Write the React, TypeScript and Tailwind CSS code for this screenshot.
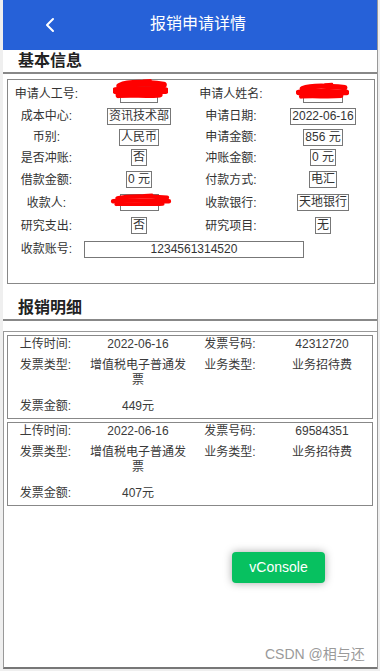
import React from "react";

const FONT = { fontFamily: '"Liberation Sans", "Noto Sans CJK SC", sans-serif' };

function Scribble({ w, h, className }: { w: number; h: number; className: string }) {
  return (
    <svg
      width={w}
      height={h}
      viewBox={`0 0 ${w} ${h}`}
      className={className}
      fill="none"
      stroke="#ff0000"
      strokeLinecap="round"
      strokeLinejoin="round"
    >
      <path d={`M${w * 0.12} ${h * 0.35} C ${w * 0.3} ${h * 0.15}, ${w * 0.6} ${h * 0.2}, ${w * 0.92} ${h * 0.3}`} strokeWidth={h * 0.28} />
      <path d={`M${w * 0.05} ${h * 0.55} C ${w * 0.3} ${h * 0.45}, ${w * 0.6} ${h * 0.5}, ${w * 0.95} ${h * 0.55}`} strokeWidth={h * 0.3} />
      <path d={`M${w * 0.1} ${h * 0.75} C ${w * 0.35} ${h * 0.7}, ${w * 0.6} ${h * 0.78}, ${w * 0.85} ${h * 0.72}`} strokeWidth={h * 0.25} />
      <path d={`M${w * 0.55} ${h * 0.12} L ${w * 0.68} ${h * 0.1}`} strokeWidth={h * 0.12} />
    </svg>
  );
}

function ValBox({ children }: { children: React.ReactNode }) {
  return (
    <span className="inline-block border border-[#777] leading-[15px] px-[1px] text-[12px] text-[#333] whitespace-nowrap">
      {children}
    </span>
  );
}

function Redacted({ w, sw, sh, sl, st }: { w: number; sw: number; sh: number; sl: number; st: number }) {
  return (
    <span className="relative inline-block h-[17px] border border-[#777]" style={{ width: w }}>
      <span className="absolute" style={{ left: sl, top: st }}>
        <Scribble w={sw} h={sh} className="block" />
      </span>
    </span>
  );
}

const COLS = "grid grid-cols-[75px_110px_74px_110px]";

function BasicRow({ h, cells }: { h: number; cells: React.ReactNode[] }) {
  return (
    <div className={`${COLS} items-center`} style={{ height: h }}>
      {cells.map((c, i) => (
        <div key={i} className={`flex justify-center text-[12px] text-[#333] whitespace-nowrap ${i % 2 === 1 ? "" : ""}`}>
          {c}
        </div>
      ))}
    </div>
  );
}

function SectionTitle({ text }: { text: string }) {
  return (
    <div>
      <div className="h-[22px] leading-[22px] pl-[15px] text-[16px] font-bold text-[#222]">{text}</div>
      <div className="h-[2px] bg-[#888]" />
    </div>
  );
}

function InvoiceCard({ time, no, amount }: { time: string; no: string; amount: string }) {
  return (
    <div className="border border-[#888] ml-[3px] mr-[4px] pt-[1px] pb-[4px] text-[12px] leading-[15px] text-[#3a3a3a]">
      <div className={`${COLS} items-start`}>
        <div className="text-center">上传时间:</div>
        <div className="text-center px-[5px]">{time}</div>
        <div className="text-center">发票号码:</div>
        <div className="text-center">{no}</div>
      </div>
      <div className={`${COLS} items-start mt-[6px]`}>
        <div className="text-center">发票类型:</div>
        <div className="text-center px-[5px]">增值税电子普通发票</div>
        <div className="text-center">业务类型:</div>
        <div className="text-center">业务招待费</div>
      </div>
      <div className={`${COLS} items-start mt-[11px]`}>
        <div className="text-center">发票金额:</div>
        <div className="text-center px-[5px]">{amount}</div>
        <div />
        <div />
      </div>
    </div>
  );
}

export default function App() {
  return (
    <div className="min-h-[671px] w-[380px] bg-[#efefef] overflow-hidden" style={FONT}>
      <div className="relative ml-[3px] w-[375px] h-[669px] bg-white border-r border-[#999] flex flex-col">
        {/* Header */}
        <div className="h-[50px] bg-[#2661d8] flex items-center shrink-0">
          <div className="w-[60px] pl-[42px] flex items-center">
            <svg width="10" height="16" viewBox="0 0 10 16" fill="none" stroke="white" strokeWidth="2" strokeLinecap="round" strokeLinejoin="round">
              <polyline points="8,2 2,8 8,14" />
            </svg>
          </div>
          <div className="flex-1 text-center pr-[44px] text-[16px] text-white leading-[22px] -mt-[3px]">报销申请详情</div>
        </div>

        <SectionTitle text="基本信息" />

        {/* Basic info box */}
        <div className="mt-[5px] ml-[4px] mr-[2px] border border-[#888] pt-[3px] pb-[22px] pl-[1px]">
          <BasicRow
            h={22}
            cells={[
              "申请人工号:",
              <Redacted w={38} sw={55} sh={23} sl={-8} st={-9} />,
              "申请人姓名:",
              <Redacted w={40} sw={53} sh={19} sl={-8} st={-5} />,
            ]}
          />
          <BasicRow h={22} cells={["成本中心:", <ValBox>资讯技术部</ValBox>, "申请日期:", <ValBox>2022-06-16</ValBox>]} />
          <BasicRow h={20} cells={["币别:", <ValBox>人民币</ValBox>, "申请金额:", <ValBox>856 元</ValBox>]} />
          <BasicRow h={21} cells={["是否冲账:", <ValBox>否</ValBox>, "冲账金额:", <ValBox>0 元</ValBox>]} />
          <BasicRow h={23} cells={["借款金额:", <ValBox>0 元</ValBox>, "付款方式:", <ValBox>电汇</ValBox>]} />
          <BasicRow
            h={23}
            cells={[
              "收款人:",
              <Redacted w={39} sw={62} sh={15} sl={-11} st={-2} />,
              "收款银行:",
              <ValBox>天地银行</ValBox>,
            ]}
          />
          <BasicRow h={23} cells={["研究支出:", <ValBox>否</ValBox>, "研究项目:", <ValBox>无</ValBox>]} />
          <div className="flex items-center h-[24px]">
            <div className="w-[75px] text-center text-[12px] text-[#333]">收款账号:</div>
            <div className="w-[220px] h-[17px] border border-[#777] text-center text-[12px] leading-[15px] text-[#333]">
              1234561314520
            </div>
          </div>
        </div>

        <div className="mt-[13px]">
          <SectionTitle text="报销明细" />
        </div>

        {/* Invoice list */}
        <div className="mt-[10px] flex-1 border-t border-l border-b-2 border-t-[#999] border-l-[#999] border-b-[#777] pt-[3px]">
          <InvoiceCard time="2022-06-16" no="42312720" amount="449元" />
          <div className="h-[3px]" />
          <InvoiceCard time="2022-06-16" no="69584351" amount="407元" />
        </div>

        {/* vConsole floating button */}
        <div className="absolute left-[229px] top-[552px] w-[93px] h-[31px] rounded-[4px] bg-[#07c160] text-white text-[14px] flex items-center justify-center shadow-[0_0_8px_rgba(0,0,0,0.35)]">
          vConsole
        </div>

        {/* Watermark */}
        <div className="absolute left-[262px] top-[645px] text-[14px] leading-[18px] text-[#9a9a9a] whitespace-nowrap">
          CSDN @相与还
        </div>
      </div>
    </div>
  );
}
